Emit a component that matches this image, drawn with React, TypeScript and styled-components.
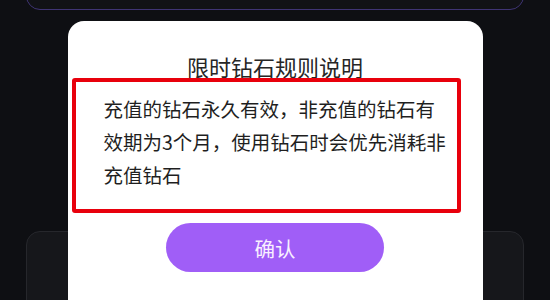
import styled, { createGlobalStyle } from "styled-components";

const GlobalStyle = createGlobalStyle`
  html, body {
    margin: 0;
    padding: 0;
    background: #0e0f13;
    font-family: "Noto Sans CJK SC", "Noto Sans", sans-serif;
  }
`;

const Page = styled.div`
  position: relative;
  height: 300px;
  overflow: hidden;
  padding: 0 26px;
  display: flex;
  flex-direction: column;
  box-sizing: border-box;
`;

const TopCard = styled.div`
  height: 48px;
  margin-top: -40px;
  flex-shrink: 0;
  border: 1.5px solid #3f3474;
  border-radius: 14px;
  background: #111216;
`;

const BottomCard = styled.div`
  height: 120px;
  margin-top: 221px;
  flex-shrink: 0;
  border: 1.5px solid #26272c;
  border-radius: 14px;
  background: #16171b;
`;

const Overlay = styled.div`
  position: absolute;
  inset: 0;
  display: flex;
  justify-content: center;
  padding-top: 21px;
`;

const Modal = styled.div`
  width: 415px;
  height: 320px;
  flex-shrink: 0;
  background: #ffffff;
  border-radius: 16px;
  padding-top: 32px;
  box-sizing: border-box;
  display: flex;
  flex-direction: column;
`;

const Title = styled.h2`
  margin: 0;
  text-align: center;
  font-size: 22px;
  line-height: 26px;
  font-weight: 400;
  color: #262626;
`;

const Notice = styled.p`
  width: 389px;
  margin: -1px 0 0 4px;
  padding: 10px 9px 18px 28px;
  box-sizing: border-box;
  border: 4px solid #e8000c;
  border-radius: 3px;
  font-size: 19.5px;
  line-height: 33px;
  color: #1f1f1f;
`;

const ConfirmButton = styled.button`
  width: 218px;
  height: 49px;
  margin: 10px auto 0;
  border: none;
  border-radius: 25px;
  background: #a05ef7;
  color: #f8f0ff;
  font-family: inherit;
  font-size: 20.5px;
  cursor: pointer;
`;

export default function App() {
  return (
    <>
      <GlobalStyle />
      <Page>
        <TopCard />
        <BottomCard />
        <Overlay>
          <Modal>
            <Title>限时钻石规则说明</Title>
            <Notice>
              充值的钻石永久有效，非充值的钻石有效期为3个月，使用钻石时会优先消耗非充值钻石
            </Notice>
            <ConfirmButton>确认</ConfirmButton>
          </Modal>
        </Overlay>
      </Page>
    </>
  );
}
